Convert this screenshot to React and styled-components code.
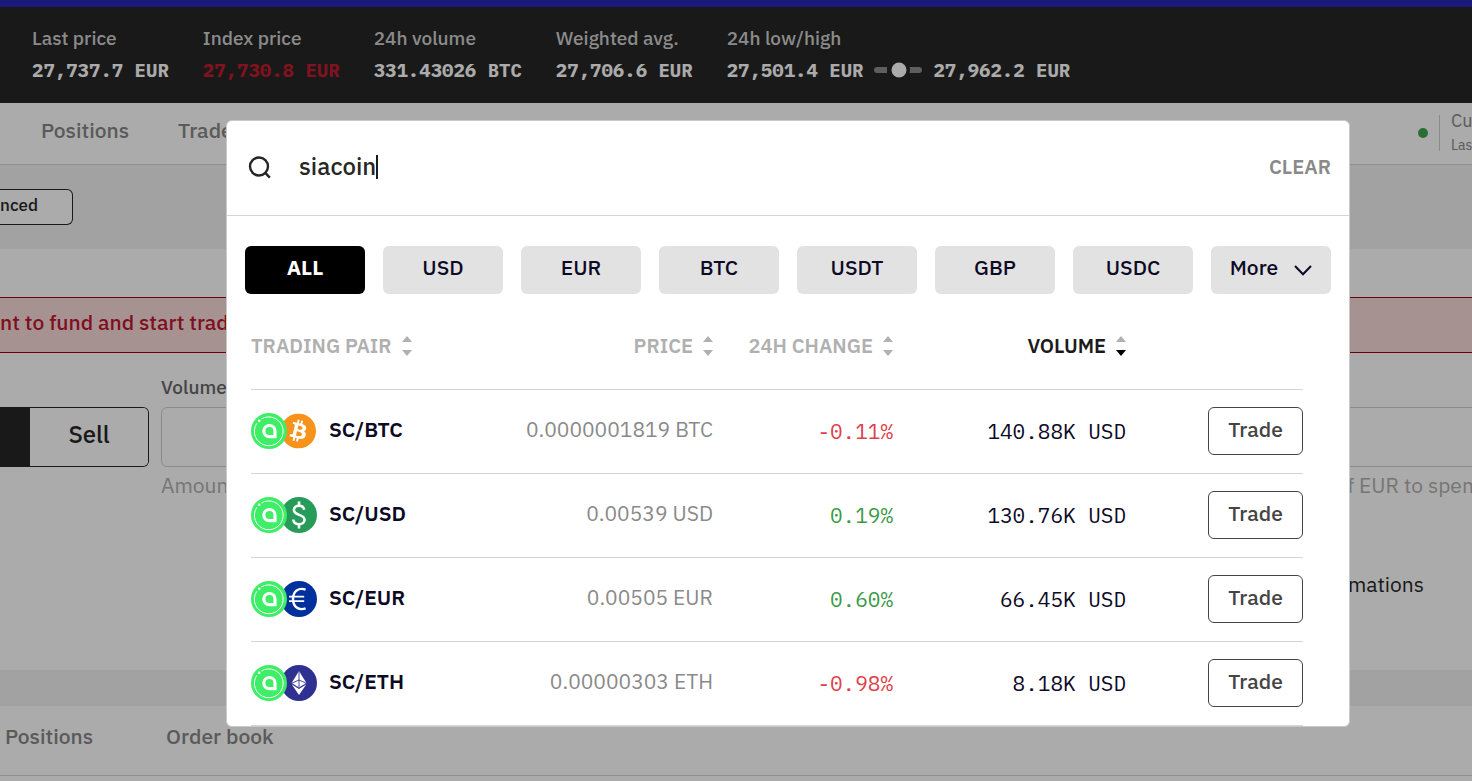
import { useState } from 'react';
import styled, { createGlobalStyle } from 'styled-components';
import { SiBitcoin } from 'react-icons/si';

const GlobalStyle = createGlobalStyle`
  *, *::before, *::after {
    box-sizing: border-box;
  }

  body {
    margin: 0;
    overflow: hidden;
    background: #fff;
    color: #272727;
    font-family: 'IBM Plex Sans', 'Noto Sans', sans-serif;
    font-size: 21px;
    line-height: 24px;
  }

  button, input {
    font: inherit;
    color: inherit;
  }

  button {
    cursor: pointer;
  }
`;

const mono = `'IBM Plex Mono', 'Liberation Mono', monospace`;

const Page = styled.div`
  min-height: 100vh;
  overflow: hidden;
`;

const Announcement = styled.div`
  height: 7px;
  background: #2b27b4;
`;

const Ticker = styled.header`
  display: flex;
  gap: 34px;
  height: 96px;
  padding: 19px 32px 0;
  background: #262626;
  white-space: nowrap;
`;

const Stat = styled.div`
  display: flex;
  flex-direction: column;
  gap: 8px;
`;

const StatLabel = styled.span`
  color: #d0d0d0;
  font-size: 19px;
  font-weight: 500;
`;

const StatValue = styled.div`
  display: flex;
  align-items: center;
  gap: 11px;
  color: ${({ $down }) => ($down ? '#c01c30' : '#fff')};
  font-family: ${mono};
  font-size: 19px;
  font-weight: 700;
`;

const Nav = styled.nav`
  display: flex;
  align-items: center;
  gap: 49px;
  height: 62px;
  padding: 0 0 2px 41px;
  border-bottom: 1px solid #d6d6d6;
`;

const NavLink = styled.a`
  padding-bottom: 6px;
  color: #868686;
  font-weight: 500;
  text-decoration: none;
`;

const Status = styled.div`
  display: flex;
  align-items: center;
  gap: 11px;
  margin-left: auto;
  color: #868686;
`;

const StatusDot = styled.span`
  width: 10px;
  height: 10px;
  border-radius: 50%;
  background: #3fa451;
`;

const StatusText = styled.div`
  display: flex;
  flex-direction: column;
  justify-content: space-between;
  width: 33px;
  height: 36px;
  padding-left: 11px;
  border-left: 1px solid #d0d0d0;
  font-size: 18px;
  line-height: 12px;
  white-space: nowrap;

  small {
    font-size: 14px;
  }
`;

const Toolbar = styled.div`
  height: 84px;
  padding-top: 24px;
  background: #f2f2f2;
`;

const ModeButton = styled.button`
  width: 73px;
  height: 36px;
  padding: 0 34px 4px 0;
  border: 1px solid #262626;
  border-left: 0;
  border-radius: 0 6px 6px 0;
  background: #fff;
  font-size: 17px;
  font-weight: 500;
  text-align: right;
`;

const OrderPanel = styled.main`
  height: 421px;
  padding-top: 48px;
`;

const Alert = styled.p`
  height: 56px;
  margin: 0 0 22px;
  padding-top: 12px;
  border: solid #9d0016;
  border-width: 1px 0;
  background: #fadada;
  color: #bc1830;
  font-weight: 500;
`;

const OrderForm = styled.form`
  display: grid;
  grid-template-columns: 149px 1fr 1fr;
  align-items: end;
  column-gap: 12px;
`;

const SideSwitch = styled.div`
  display: flex;
  height: 60px;
  border: 1px solid #262626;
  border-left: 0;
  border-radius: 0 6px 6px 0;
  overflow: hidden;
`;

const BuyButton = styled.button`
  width: 30px;
  border: 0;
  background: #262626;
`;

const SellButton = styled.button`
  flex: 1;
  padding: 0 0 6px;
  border: 0;
  background: #fff;
  font-size: 24px;
  font-weight: 500;
`;

const Field = styled.div`
  display: flex;
  flex-direction: column;
  gap: 8px;
  margin-right: ${({ $bleed }) => ($bleed ? '-10px' : '0')};
`;

const FieldLabel = styled.label`
  color: #686868;
  font-size: 19px;
  font-weight: 500;
`;

const FieldInput = styled.input`
  width: 100%;
  height: 60px;
  padding: 0 16px;
  border: 1px solid #d0d0d0;
  border-radius: 6px;
  background: #fff;
`;

const Hints = styled.div`
  display: flex;
  justify-content: space-between;
  margin: 6px -14px 0 161px;
  color: #b0b0b0;
  white-space: nowrap;
`;

const Confirmations = styled.p`
  margin: 75px 48px 0;
  text-align: right;
`;

const Spacer = styled.div`
  height: 36px;
  background: #f2f2f2;
`;

const BottomTabs = styled.nav`
  display: flex;
  gap: 73px;
  height: 70px;
  padding: 18px 5px 0;
  border-bottom: 1px solid #d6d6d6;
`;

const Backdrop = styled.div`
  position: fixed;
  inset: 0;
  padding: 120px 122px 0 226px;
  background: rgba(0, 0, 0, 0.33);
`;

const Dialog = styled.div`
  max-height: 607px;
  border: 1px solid #cacaca;
  border-radius: 6px;
  background: #fff;
  overflow: hidden;
`;

const SearchBar = styled.div`
  display: flex;
  align-items: center;
  height: 95px;
  padding: 0 18px 2px 20px;
  border-bottom: 1px solid #d4d4d4;
`;

const SearchLabel = styled.label`
  display: flex;
  margin-right: 26px;
`;

const SearchInput = styled.input`
  field-sizing: content;
  padding: 0 0 2px;
  border: 0;
  outline: 0;
  background: transparent;
  caret-color: transparent;
  font-size: 24px;
  font-weight: 500;
  line-height: 28px;
`;

const Caret = styled.span`
  width: 2px;
  height: 24px;
  background: #1b1b1b;
`;

const ClearButton = styled.button`
  margin-left: auto;
  padding: 0;
  border: 0;
  background: none;
  color: #8a8a8a;
  font-size: 20px;
  font-weight: 600;
`;

const Filters = styled.div`
  display: grid;
  grid-template-columns: repeat(8, 1fr);
  gap: 18px;
  padding: 30px 18px 0;
`;

const FilterButton = styled.button`
  display: flex;
  align-items: center;
  justify-content: center;
  gap: 16px;
  height: 48px;
  padding: 0 0 6px;
  border: 0;
  border-radius: 6px;
  background: ${({ $active }) => ($active ? '#000' : '#e2e2e2')};
  color: ${({ $active }) => ($active ? '#fff' : '#0d0a26')};
  font-weight: ${({ $active }) => ($active ? 700 : 500)};

  svg {
    margin-top: 6px;
  }
`;

const TableWrap = styled.div`
  padding: 0 46px 0 24px;
`;

const Table = styled.table`
  width: 100%;
  table-layout: fixed;
  border-collapse: separate;
  border-spacing: 0;
`;

const HeadCell = styled.th`
  width: ${({ $width }) => $width || 'auto'};
  padding: 40px 0 31px;
  border-bottom: 1px solid #d4d4d4;
  text-align: ${({ $left }) => ($left ? 'left' : 'right')};
`;

const SortButton = styled.button`
  display: inline-flex;
  align-items: center;
  gap: 10px;
  height: 24px;
  padding: 0;
  border: 0;
  background: none;
  color: ${({ $active }) => ($active ? '#1b1b1b' : '#b0b0b0')};
  font-size: 20px;
  font-weight: 600;
  white-space: nowrap;
  vertical-align: top;
`;

const Cell = styled.td`
  height: 84px;
  padding: 0 0 2px;
  border-bottom: 1px solid #d4d4d4;
  color: #0d0a26;
  text-align: right;
  white-space: nowrap;
`;

const PriceCell = styled(Cell)`
  padding-bottom: 6px;
  color: #8a8a8a;
`;

const NumberCell = styled(Cell)`
  color: ${({ $color }) => $color || '#0d0a26'};
  font-family: ${mono};
`;

const Pair = styled.div`
  display: flex;
  align-items: center;
  font-weight: 600;
`;

const PairName = styled.span`
  padding-bottom: 3px;
`;

const Coins = styled.span`
  display: flex;
  margin-right: 12px;

  svg {
    display: block;
    flex: none;
  }

  svg:first-child {
    position: relative;
    z-index: 1;
    margin-right: -6px;
  }
`;

const TradeButton = styled.button`
  width: 95px;
  height: 48px;
  padding: 0 0 4px;
  border: 1px solid #444;
  border-radius: 6px;
  background: #fff;
  color: #444;
  font-weight: 500;
  vertical-align: middle;
`;

const SearchIcon = () => (
  <svg width="26" height="26" viewBox="0 0 26 26" fill="none" stroke="#262626" strokeWidth="2.4">
    <circle cx="12" cy="12.5" r="9" />
    <path d="M17.6 18.2 22.8 23.6" />
  </svg>
);

const ChevronIcon = () => (
  <svg width="18" height="12" viewBox="0 0 18 12" fill="none" stroke="#0d0a26" strokeWidth="2">
    <path d="M1 2 9 10.2 17 2" />
  </svg>
);

const RangeIcon = () => (
  <svg width="48" height="16" viewBox="0 0 48 16">
    <path d="M3 8h7M37 8h8" stroke="#8c8c8c" strokeWidth="6" strokeLinecap="round" />
    <rect x="9" y="5" width="4" height="6" fill="#8c8c8c" />
    <rect x="35" y="5" width="4" height="6" fill="#8c8c8c" />
    <circle cx="25" cy="8" r="11" fill="#262626" />
    <circle cx="25" cy="8" r="7.5" fill="#fff" />
  </svg>
);

const SortIcon = ({ active }) => (
  <svg width="10" height="20" viewBox="0 0 10 20">
    <path d="M0 6 5 0l5 6z" fill="#b0b0b0" />
    <path d="M0 14h10l-5 6z" fill={active ? '#000' : '#b0b0b0'} />
  </svg>
);

const SiacoinIcon = () => (
  <svg width="36" height="36" viewBox="0 0 36 36" fill="none">
    <circle cx="18" cy="18" r="18" fill="#3dee66" />
    <path d="M10.3 6A14.4 14.4 0 1 1 5.8 10.3" stroke="#fff" strokeWidth="1" />
    <circle cx="8.2" cy="7.8" r="1.3" fill="#fff" />
    <path d="M24 23.7h-5.6A5.6 5.6 0 1 1 24 18.1z" stroke="#fff" strokeWidth="3.2" />
  </svg>
);

const DollarIcon = () => (
  <svg width="36" height="36" viewBox="0 0 36 36" fill="none" stroke="#fff" strokeWidth="2.6">
    <circle cx="18" cy="18" r="18" fill="#279c58" stroke="none" />
    <path d="M23.2 12.8C22.8 10 20.8 8.8 18 8.8c-3 0-5.1 1.6-5.1 4.2 0 6 10.6 3.8 10.6 9.7 0 2.8-2.3 4.5-5.5 4.5-3.3 0-5.5-1.7-5.7-4.7" />
    <path d="M18 4.5v4.5M18 27v4.5" />
  </svg>
);

const EuroIcon = () => (
  <svg width="36" height="36" viewBox="0 0 36 36" fill="none" stroke="#fff" strokeWidth="2.4">
    <circle cx="18" cy="18" r="18" fill="#00309c" stroke="none" />
    <path d="M24.6 8.6C17.6 6.2 12 10.2 12 18s5.6 11.8 12.6 9.4" />
    <path d="M8 15.7h15.2M8 20.2h15.2" strokeWidth="1.8" />
  </svg>
);

const EtherIcon = () => (
  <svg width="36" height="36" viewBox="0 0 36 36">
    <circle cx="18" cy="18" r="18" fill="#2f3192" />
    <path d="M18 6 25.4 18 18 22.4 10.6 18z" fill="#fff" />
    <path d="M10.8 19.6 18 24l7.2-4.4L18 30z" fill="#fff" />
    <path d="M18 6v16M10.8 18.2 18 15l7.2 3.2" stroke="#2f3192" strokeWidth="0.9" fill="none" />
  </svg>
);

const BitcoinIcon = () => (
  <svg width="36" height="36" viewBox="0 0 36 36">
    <circle cx="17.5" cy="18" r="16" fill="#fff" />
    <SiBitcoin x="0" y="0.5" size={35} color="#f7931a" />
  </svg>
);

const stats = [
  { label: 'Last price', value: '27,737.7 EUR' },
  { label: 'Index price', value: '27,730.8 EUR', down: true },
  { label: '24h volume', value: '331.43026 BTC' },
  { label: 'Weighted avg.', value: '27,706.6 EUR' },
];

const currencies = ['ALL', 'USD', 'EUR', 'BTC', 'USDT', 'GBP', 'USDC'];

const columns = [
  { label: 'TRADING PAIR', left: true },
  { label: 'PRICE' },
  { label: '24H CHANGE', width: '180px' },
  { label: 'VOLUME', width: '233px', active: true },
];

const pairs = [
  { name: 'SC/BTC', Icon: BitcoinIcon, price: '0.0000001819 BTC', change: '-0.11%', volume: '140.88K USD' },
  { name: 'SC/USD', Icon: DollarIcon, price: '0.00539 USD', change: '0.19%', volume: '130.76K USD' },
  { name: 'SC/EUR', Icon: EuroIcon, price: '0.00505 EUR', change: '0.60%', volume: '66.45K USD' },
  { name: 'SC/ETH', Icon: EtherIcon, price: '0.00000303 ETH', change: '-0.98%', volume: '8.18K USD' },
];

function TradingPage() {
  return (
    <Page>
      <Announcement />
      <Ticker>
        {stats.map((stat) => (
          <Stat key={stat.label}>
            <StatLabel>{stat.label}</StatLabel>
            <StatValue $down={stat.down}>{stat.value}</StatValue>
          </Stat>
        ))}
        <Stat>
          <StatLabel>24h low/high</StatLabel>
          <StatValue>
            <span>27,501.4 EUR</span>
            <RangeIcon />
            <span>27,962.2 EUR</span>
          </StatValue>
        </Stat>
      </Ticker>

      <Nav>
        <NavLink href="#positions">Positions</NavLink>
        <NavLink href="#trades">Trades</NavLink>
        <Status>
          <StatusDot />
          <StatusText>
            <span>Cu</span>
            <small>Las</small>
          </StatusText>
        </Status>
      </Nav>

      <Toolbar>
        <ModeButton type="button">nced</ModeButton>
      </Toolbar>

      <OrderPanel>
        <Alert>nt to fund and start trad</Alert>
        <OrderForm>
          <SideSwitch>
            <BuyButton type="button" aria-label="Buy" />
            <SellButton type="button">Sell</SellButton>
          </SideSwitch>
          <Field>
            <FieldLabel htmlFor="volume">Volume</FieldLabel>
            <FieldInput id="volume" />
          </Field>
          <Field $bleed>
            <FieldInput aria-label="Total" />
          </Field>
        </OrderForm>
        <Hints>
          <span>Amount</span>
          <span>of EUR to spend</span>
        </Hints>
        <Confirmations>confirmations</Confirmations>
      </OrderPanel>

      <Spacer />
      <BottomTabs>
        <NavLink href="#open-positions">Positions</NavLink>
        <NavLink href="#order-book">Order book</NavLink>
      </BottomTabs>
    </Page>
  );
}

export default function App() {
  const [query, setQuery] = useState('siacoin');
  const [currency, setCurrency] = useState('ALL');

  return (
    <>
      <GlobalStyle />
      <TradingPage />
      <Backdrop>
        <Dialog role="dialog" aria-label="Markets">
          <SearchBar>
            <SearchLabel htmlFor="search" aria-label="Search">
              <SearchIcon />
            </SearchLabel>
            <SearchInput id="search" value={query} onChange={(e) => setQuery(e.target.value)} />
            <Caret />
            <ClearButton type="button" onClick={() => setQuery('')}>
              CLEAR
            </ClearButton>
          </SearchBar>

          <Filters>
            {currencies.map((item) => (
              <FilterButton
                key={item}
                type="button"
                $active={item === currency}
                onClick={() => setCurrency(item)}
              >
                {item}
              </FilterButton>
            ))}
            <FilterButton type="button" aria-haspopup="menu">
              More
              <ChevronIcon />
            </FilterButton>
          </Filters>

          <TableWrap>
            <Table>
              <thead>
                <tr>
                  {columns.map((col) => (
                    <HeadCell key={col.label} $left={col.left} $width={col.width}>
                      <SortButton type="button" $active={col.active}>
                        {col.label}
                        <SortIcon active={col.active} />
                      </SortButton>
                    </HeadCell>
                  ))}
                  <HeadCell $width="177px" aria-label="Actions" />
                </tr>
              </thead>
              <tbody>
                {pairs.map(({ name, Icon, price, change, volume }) => (
                  <tr key={name}>
                    <Cell>
                      <Pair>
                        <Coins>
                          <SiacoinIcon />
                          <Icon />
                        </Coins>
                        <PairName>{name}</PairName>
                      </Pair>
                    </Cell>
                    <PriceCell>{price}</PriceCell>
                    <NumberCell $color={change.startsWith('-') ? '#e0404a' : '#3a9a48'}>
                      {change}
                    </NumberCell>
                    <NumberCell>{volume}</NumberCell>
                    <Cell>
                      <TradeButton type="button">Trade</TradeButton>
                    </Cell>
                  </tr>
                ))}
              </tbody>
            </Table>
          </TableWrap>
        </Dialog>
      </Backdrop>
    </>
  );
}
